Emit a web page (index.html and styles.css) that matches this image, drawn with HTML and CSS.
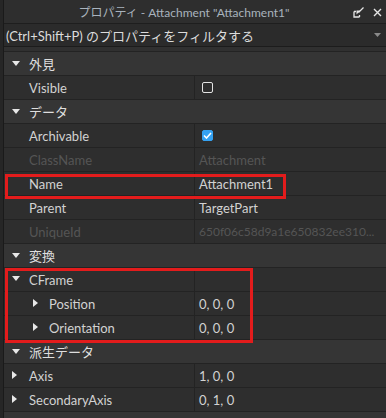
FILE: index.html
```html
<!DOCTYPE html>
<html lang="ja">
<head>
  <meta charset="UTF-8">
  <meta name="viewport" content="width=device-width, initial-scale=1.0">
  <title>プロパティ</title>
  <link rel="stylesheet" href="styles.css">
</head>
<body>
<div id="panel">
  <div class="titlebar">
    <span class="title">プロパティ - Attachment "Attachment1"</span>
    <span class="tools">
      <svg width="11" height="11" viewBox="0 0 11 11">
        <path d="M1 4.5 V10 H6.5" fill="none" stroke="#e6e6e6" stroke-width="1.3"/>
        <path d="M1 4.5 H3 M6.5 10 V8" fill="none" stroke="#e6e6e6" stroke-width="1.3"/>
        <path d="M10.5 0.5 L5.5 5.5" stroke="#e6e6e6" stroke-width="1.3"/>
        <path d="M3.5 3.5 H7.5 L3.5 7.5 Z" fill="#e6e6e6"/>
      </svg>
      <svg width="9" height="9" viewBox="0 0 9 9">
        <path d="M1 1 L8 8 M8 1 L1 8" stroke="#e6e6e6" stroke-width="1.4"/>
      </svg>
    </span>
  </div>
  <div class="filter">
    <span>(Ctrl+Shift+P) のプロパティをフィルタする</span>
    <svg width="7" height="4" viewBox="0 0 7 4"><path d="M0 0 H7 L3.5 4 Z" fill="#8a8a8a"/></svg>
  </div>
  <div class="gap"></div>

  <div class="section"><i class="tri down"></i>外見</div>
  <div class="row"><div class="name">Visible</div><div class="value"><span class="box"></span></div></div>

  <div class="section"><i class="tri down"></i>データ</div>
  <div class="row"><div class="name">Archivable</div><div class="value"><span class="box on">
    <svg width="9" height="7" viewBox="0 0 9 7"><path d="M1 3.5 L3.5 6 L8 1" fill="none" stroke="#fff" stroke-width="1.6"/></svg>
  </span></div></div>
  <div class="row dim"><div class="name">ClassName</div><div class="value">Attachment</div></div>
  <div class="row"><div class="name">Name</div><div class="value">Attachment1</div></div>
  <div class="row"><div class="name">Parent</div><div class="value">TargetPart</div></div>
  <div class="row dim"><div class="name">UniqueId</div><div class="value id">650f06c58d9a1e650832ee310...</div></div>

  <div class="section"><i class="tri down"></i>変換</div>
  <div class="row"><div class="name"><i class="tri down"></i>CFrame</div><div class="value"></div></div>
  <div class="row child"><div class="name"><i class="tri right"></i>Position</div><div class="value">0, 0, 0</div></div>
  <div class="row child"><div class="name"><i class="tri right"></i>Orientation</div><div class="value">0, 0, 0</div></div>

  <div class="section"><i class="tri down"></i>派生データ</div>
  <div class="row"><div class="name"><i class="tri right"></i>Axis</div><div class="value">1, 0, 0</div></div>
  <div class="row"><div class="name"><i class="tri right"></i>SecondaryAxis</div><div class="value">0, 1, 0</div></div>

  <div class="section"><i class="tri down"></i>試験的な機能</div>

  <div class="mark mark-name"></div>
  <div class="mark mark-cframe"></div>
</div>
</body>
</html>
```

FILE: styles.css
```css
body {
  margin: 0;
  background: #262626;
  overflow: hidden;
  font-family: Lato, "Noto Sans CJK JP", sans-serif;
  font-size: 13px;
  color: #d2d2d2;
}

#panel {
  position: relative;
  margin-left: 3px;
  border-left: 1px solid #1a1a1a;
  height: 418px;
  background: #2e2e2e;
}

.titlebar {
  height: 23px;
  border-bottom: 1px solid #1e1e1e;
  background: #2e2e2e;
  display: flex;
  align-items: center;
  justify-content: center;
  position: relative;
}
.title {
  color: #a9b3bd;
  font-size: 12px;
  margin-left: -22px;
}
.tools {
  position: absolute;
  right: 4px;
  top: 7px;
  display: flex;
  gap: 9px;
  align-items: center;
}

.filter {
  height: 22px;
  border-bottom: 1px solid #1c1c1c;
  background: #2b2b2b;
  display: flex;
  align-items: center;
  justify-content: space-between;
  padding: 0 5px 0 2px;
  color: #dcdcdc;
}

.gap {
  height: 4px;
  border-bottom: 1px solid #232323;
  background: #303030;
}

.section {
  height: 23px;
  border-bottom: 1px solid #232323;
  background: #353535;
  display: flex;
  align-items: center;
  padding-left: 25px;
  position: relative;
  color: #dedede;
}
.section .tri {
  position: absolute;
  left: 8px;
  top: 9px;
}

.row {
  height: 23px;
  border-bottom: 1px solid #232323;
  display: grid;
  grid-template-columns: 191px 1fr;
}
.row .name {
  position: relative;
  display: flex;
  align-items: center;
  padding-left: 25px;
  border-right: 1px solid #232323;
}
.row .value {
  display: flex;
  align-items: center;
  padding: 0 2px 0 4px;
  overflow: hidden;
  white-space: nowrap;
}
.row .value.id {
  font-size: 12px;
}
.row .name .tri {
  position: absolute;
  left: 8px;
  top: 8px;
}
.row.child .name {
  padding-left: 45px;
}
.row.child .name .tri {
  left: 29px;
}
.row.dim {
  color: #555555;
}

.tri {
  display: block;
  width: 0;
  height: 0;
}
.tri.down {
  border-left: 4px solid transparent;
  border-right: 4px solid transparent;
  border-top: 5px solid #e8e8e8;
}
.tri.right {
  border-top: 4px solid transparent;
  border-bottom: 4px solid transparent;
  border-left: 5px solid #e8e8e8;
  margin-top: -1px;
}

.box {
  width: 9px;
  height: 9px;
  border: 1.5px solid #e4e4e4;
  border-radius: 2px;
  margin-left: 3px;
  display: flex;
  align-items: center;
  justify-content: center;
}
.box.on {
  background: #35a2f2;
  border-color: #35a2f2;
}

.mark {
  position: absolute;
  border: 3px solid #e31c1c;
}
.mark-name {
  left: 1px;
  top: 174px;
  width: 275px;
  height: 19px;
}
.mark-cframe {
  left: 1px;
  top: 268px;
  width: 242px;
  height: 69px;
}
```
